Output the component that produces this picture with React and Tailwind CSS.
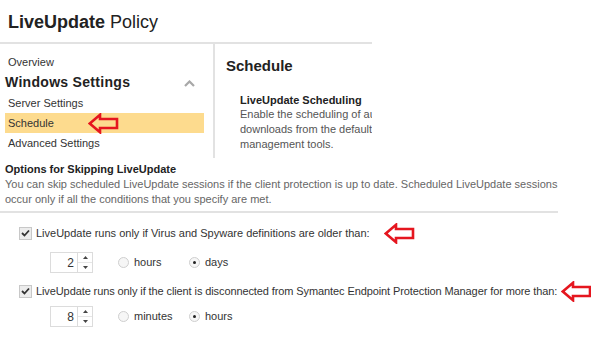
import React from "react";

function RedArrow() {
  return (
    <svg width="31" height="21" viewBox="0 0 31 21" className="shrink-0">
      <path
        d="M1.8 10.5 L12 1.8 V6 H29 V15 H12 V19.2 Z"
        fill="none"
        stroke="#e5161f"
        strokeWidth="2.6"
      />
    </svg>
  );
}

function Checkbox() {
  return (
    <span className="w-[13px] h-[13px] border border-[#c8c8c8] bg-[#ececec] flex items-center justify-center shrink-0">
      <svg width="9" height="8" viewBox="0 0 9 8">
        <path d="M1 4 L3.5 6.5 L8 1.5" fill="none" stroke="#333" strokeWidth="1.8" />
      </svg>
    </span>
  );
}

function Spinner({ value }) {
  return (
    <div className="flex w-[43px] h-[21px] border border-[#dcdcdc] bg-white">
      <div className="flex-1 flex items-center justify-end pr-[3px] text-[12px] text-[#333]">
        {value}
      </div>
      <div className="w-[15px] border-l border-[#dcdcdc] flex flex-col">
        <div className="flex-1 flex items-center justify-center border-b border-[#e6e6e6]">
          <svg width="5" height="3" viewBox="0 0 5 3">
            <path d="M0 3 L2.5 0 L5 3 Z" fill="#444" />
          </svg>
        </div>
        <div className="flex-1 flex items-center justify-center">
          <svg width="5" height="3" viewBox="0 0 5 3">
            <path d="M0 0 L2.5 3 L5 0 Z" fill="#444" />
          </svg>
        </div>
      </div>
    </div>
  );
}

function Radio({ label, checked }) {
  return (
    <div className="w-[71px] flex items-center gap-[5px]">
      <span className="w-[11px] h-[11px] rounded-full border border-[#cfcfcf] bg-[#f6f6f6] flex items-center justify-center shrink-0">
        {checked && <span className="w-[3px] h-[3px] rounded-full bg-[#222]" />}
      </span>
      <span className="text-[#333]">{label}</span>
    </div>
  );
}

export default function App() {
  return (
    <div
      className="w-[591px] h-[355px] bg-white text-[11px] text-[#333] overflow-hidden"
      style={{ fontFamily: '"Liberation Sans", Arial, sans-serif' }}
    >
      {/* top area */}
      <div className="w-[372px]">
        <div className="h-[44px] flex items-center pl-[8px] pt-[3px] text-[18px] text-[#222] border-b-2 border-[#e2e2e2]">
          <span className="font-bold">LiveUpdate</span>
          <span>&nbsp;Policy</span>
        </div>
        <div className="flex h-[114px]">
          {/* nav */}
          <div className="w-[215px] border-r-2 border-[#e2e2e2] pt-[8px] pl-[5px] pr-[9px] shrink-0">
            <div className="h-[20px] flex items-center pl-[3px]">Overview</div>
            <div className="h-[21px] flex items-center justify-between">
              <span className="font-bold text-[14px] text-[#222] tracking-[0.3px]">Windows Settings</span>
              <svg width="11" height="7" viewBox="0 0 11 7" className="mr-[9px] mt-[2px]">
                <path d="M1 6 L5.5 1.5 L10 6" fill="none" stroke="#a8a8a8" strokeWidth="2.2" />
              </svg>
            </div>
            <div className="h-[20px] flex items-center pl-[3px] pt-[1px]">Server Settings</div>
            <div className="h-[20px] flex items-center pl-[3px] bg-[#fddb8e]">
              <span>Schedule</span>
              <span className="ml-[34px] flex">
                <RedArrow />
              </span>
            </div>
            <div className="h-[20px] flex items-center pl-[3px]">Advanced Settings</div>
          </div>
          {/* right panel */}
          <div className="flex-1 overflow-hidden pl-[11px]">
            <div className="w-[300px]">
              <div className="text-[15px] font-bold text-[#222] mt-[13px] leading-[18px]">Schedule</div>
              <div className="pl-[14px] mt-[18px] leading-[15px] whitespace-nowrap">
                <div className="font-bold text-[#222] mb-[-1px]">LiveUpdate Scheduling</div>
                <div className="text-[#555]">Enable the scheduling of automatic LiveUpdate</div>
                <div className="text-[#555]">downloads from the default management server</div>
                <div className="text-[#555]">management tools.</div>
              </div>
            </div>
          </div>
        </div>
      </div>

      {/* options */}
      <div className="w-[558px]">
        <div className="pl-[5px] pt-[4px] leading-[15px]">
          <div className="font-bold text-[#222]">Options for Skipping LiveUpdate</div>
          <div className="text-[#666]">
            You can skip scheduled LiveUpdate sessions if the client protection is up to date. Scheduled LiveUpdate sessions
            occur only if all the conditions that you specify are met.
          </div>
        </div>
        <div className="mt-[4px] border-b-2 border-[#e2e2e2]" />

        <div className="mt-[10px] h-[20px] flex items-center pl-[19px]">
          <Checkbox />
          <span className="ml-[4px] whitespace-nowrap">
            LiveUpdate runs only if Virus and Spyware definitions are older than:
          </span>
          <span className="ml-[14px] flex">
            <RedArrow />
          </span>
        </div>
        <div className="mt-[9px] flex items-center pl-[50px]">
          <Spinner value="2" />
          <div className="ml-[25px] flex">
            <Radio label="hours" />
            <Radio label="days" checked />
          </div>
        </div>

        <div className="mt-[8px] h-[20px] flex items-center pl-[19px]">
          <Checkbox />
          <span className="ml-[4px] whitespace-nowrap tracking-[-0.1px]">
            LiveUpdate runs only if the client is disconnected from Symantec Endpoint Protection Manager for more than:
          </span>
          <span className="ml-[4px] flex">
            <RedArrow />
          </span>
        </div>
        <div className="mt-[5px] flex items-center pl-[50px]">
          <Spinner value="8" />
          <div className="ml-[25px] flex">
            <Radio label="minutes" />
            <Radio label="hours" checked />
          </div>
        </div>
      </div>
    </div>
  );
}
